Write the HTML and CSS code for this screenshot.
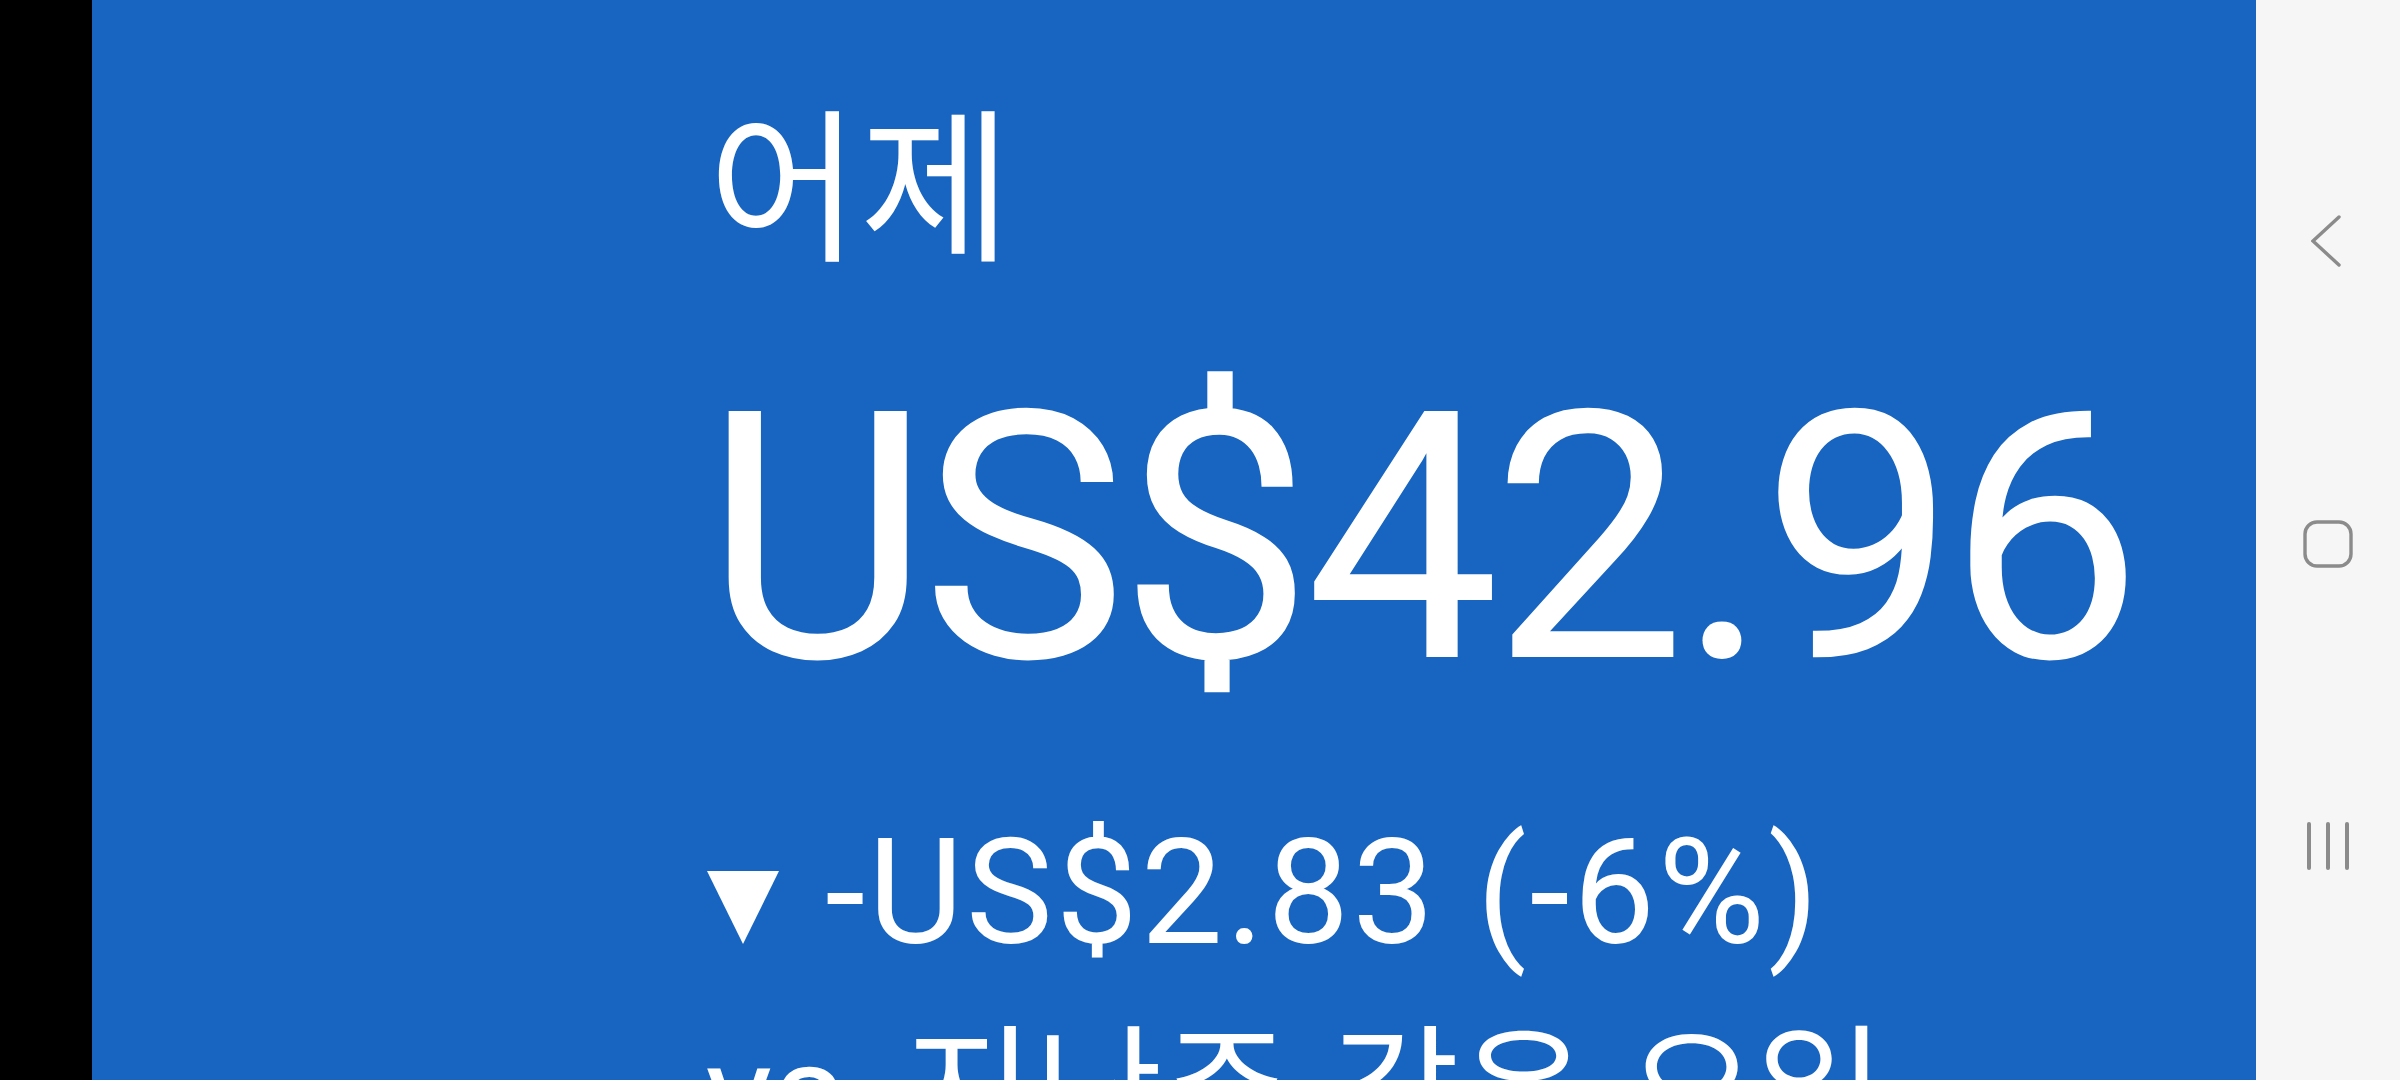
FILE: index.html
```html
<!DOCTYPE html>
<html lang="ko">
<head>
<meta charset="utf-8">
<title>어제</title>
<link rel="stylesheet" href="styles.css">
</head>
<body>
<div class="screen">
  <div class="cutout"></div>
  <main class="card">
    <div class="content">
      <div class="label">어제</div>
      <div class="amount">US$42.96</div>
      <div class="change">
        <svg class="tri" width="72" height="73" viewBox="0 0 72 73"><polygon points="0,0 72,0 36,73" fill="#fff"/></svg>
        <span class="delta">-US$2.83 (-6%)</span>
      </div>
      <div class="compare"><span class="vs">vs.</span> 지난주 같은 요일</div>
    </div>
  </main>
  <nav class="navbar">
    <svg class="nav-back" width="30" height="52" viewBox="0 0 30 52"><polyline points="28,2 2,26 28,50" fill="none" stroke="#8b8b8b" stroke-width="3.4" stroke-linecap="round" stroke-linejoin="miter"/></svg>
    <svg class="nav-home" width="52" height="50" viewBox="0 0 52 50"><rect x="3" y="3" width="46" height="44" rx="12" ry="12" fill="none" stroke="#8b8b8b" stroke-width="3.4"/></svg>
    <svg class="nav-recent" width="48" height="50" viewBox="0 0 48 50"><g stroke="#8b8b8b" stroke-width="4" stroke-linecap="round"><line x1="5" y1="3" x2="5" y2="47"/><line x1="24" y1="3" x2="24" y2="47"/><line x1="43" y1="3" x2="43" y2="47"/></g></svg>
  </nav>
</div>
</body>
</html>
```

FILE: styles.css
```css
html, body {
  margin: 0;
  padding: 0;
  width: 2400px;
  height: 1080px;
  overflow: hidden;
  background: #000;
}
.screen {
  display: flex;
  width: 2400px;
  height: 1080px;
}
.cutout {
  width: 92px;
  flex: none;
  background: #000;
}
.card {
  flex: 1;
  background: #1765c0;
  color: #fff;
  overflow: hidden;
}
.content {
  display: flex;
  flex-direction: column;
  padding: 95px 0 0 613px;
}
.label {
  margin-left: 3px;
  font-family: "Noto Sans CJK KR", "Noto Sans", sans-serif;
  font-size: 165px;
  line-height: 164px;
  height: 164px;
}
.amount {
  margin-top: 107px;
  font-family: Roboto, "Noto Sans", sans-serif;
  font-size: 346px;
  line-height: 346px;
  height: 346px;
  letter-spacing: -8px;
}
.change {
  margin-top: 109px;
  display: flex;
  align-items: flex-start;
  height: 146px;
}
.tri {
  flex: none;
  margin-top: 50px;
  margin-left: 2px;
}
.delta {
  margin-left: 46px;
  font-family: Roboto, "Noto Sans", sans-serif;
  font-size: 146px;
  line-height: 146px;
  letter-spacing: 3px;
  white-space: nowrap;
}
.compare {
  margin-top: 44px;
  font-family: "Noto Sans CJK KR", sans-serif;
  font-size: 140px;
  line-height: 140px;
  white-space: nowrap;
}
.vs {
  font-family: Roboto, sans-serif;
  margin-right: -16px;
}
.navbar {
  width: 144px;
  flex: none;
  background: #f6f6f6;
  display: flex;
  flex-direction: column;
  align-items: center;
  padding-top: 215px;
  gap: 252px;
  box-sizing: border-box;
}
.navbar svg {
  display: block;
}
.nav-back {
  margin-left: -4px;
}
```
